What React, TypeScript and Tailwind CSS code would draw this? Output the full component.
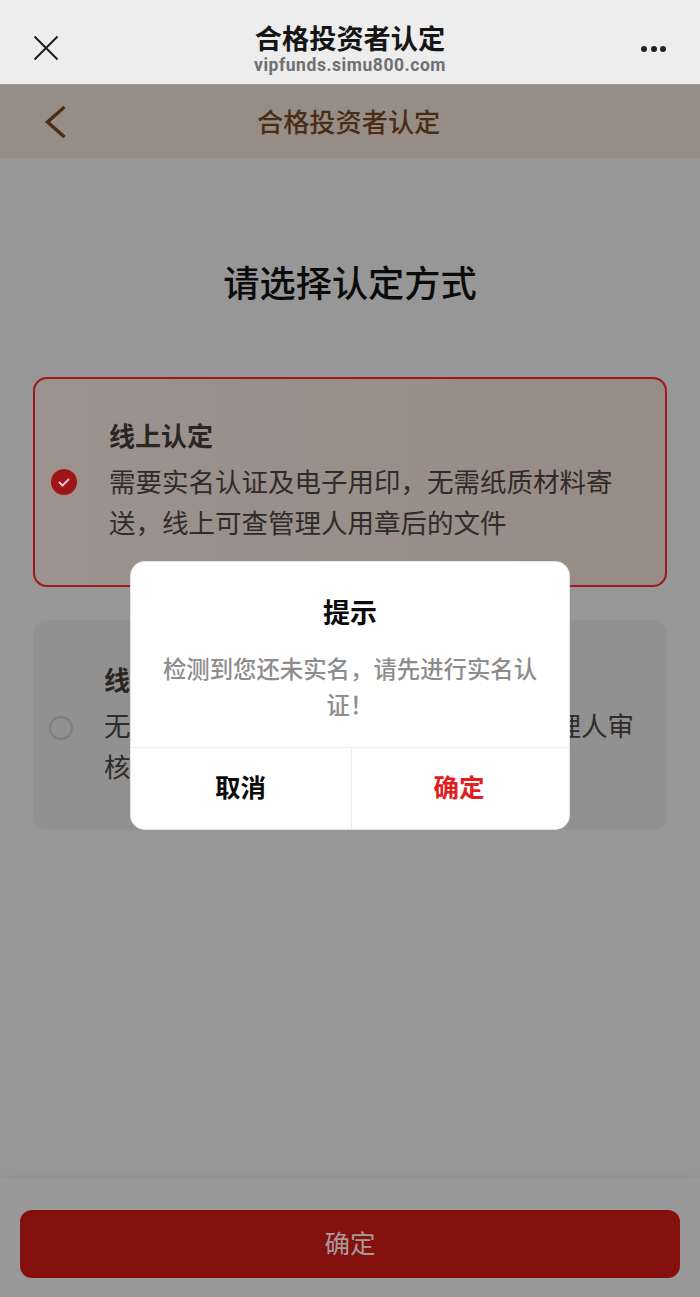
const cjk = "font-['Noto_Sans_CJK_SC','Noto_Sans',sans-serif]";

function MethodCard(props: { active: boolean; title: string; lines: string[] }) {
  const { active, title, lines } = props;
  return (
    <div
      className={
        active
          ? "flex h-[210px] items-center rounded-[14px] border-2 border-[#a0181c] bg-gradient-to-r from-[#9c938e] to-[#978b85] pl-[16px]"
          : "flex h-[210px] items-center rounded-[14px] bg-[#919191] pl-[16px]"
      }
    >
      {active ? (
        <div className="flex h-[26px] w-[26px] shrink-0 items-center justify-center rounded-full bg-[#a01517]">
          <svg width="14" height="12" viewBox="0 0 14 12" fill="none">
            <path d="M2 6l3.5 3.5L12 3" stroke="#d9c9c5" strokeWidth="2" />
          </svg>
        </div>
      ) : (
        <div className="mt-[5px] h-[24px] w-[24px] shrink-0 rounded-full border-2 border-[#7f7f7f]" />
      )}
      <div className={active ? "ml-[32px] pr-[40px] pb-[6px]" : "ml-[31px] pr-[28px] pb-[4px]"}>
        <p className="mb-[6px] text-[26px] leading-[38px] font-bold text-[#2a2623]">{title}</p>
        {lines.map((line) => (
          <p key={line} className="text-[26.5px] leading-[41px] whitespace-nowrap text-[#2f2b28]">
            {line}
          </p>
        ))}
      </div>
    </div>
  );
}

export default function App() {
  return (
    <div className={`relative flex h-[1297px] w-[700px] flex-col overflow-hidden bg-[#979797] ${cjk}`}>
      {/* wechat bar */}
      <div className="flex h-[84px] shrink-0 items-center justify-between bg-[#ededed] pt-[12px] pr-[33px] pl-[33px]">
        <svg width="26" height="26" viewBox="0 0 26 26" fill="none">
          <path d="M1.5 1.5l23 23M24.5 1.5l-23 23" stroke="#1c1c1c" strokeWidth="2" />
        </svg>
        <div className="flex flex-col items-center">
          <p className="text-[27.2px] leading-[33px] font-bold text-[#151515]">合格投资者认定</p>
          <p className="font-['Roboto',sans-serif] text-[17.5px] leading-[22px] font-bold tracking-[0.55px] text-[#6f7072]">
            vipfunds.simu800.com
          </p>
        </div>
        <div className="flex w-[26px] gap-[3.5px] pt-[2px]">
          <span className="h-[6px] w-[6px] shrink-0 rounded-full bg-[#222]" />
          <span className="h-[6px] w-[6px] shrink-0 rounded-full bg-[#222]" />
          <span className="h-[6px] w-[6px] shrink-0 rounded-full bg-[#222]" />
        </div>
      </div>

      {/* page nav */}
      <div className="mt-px flex h-[73px] shrink-0 items-center bg-[#978d87] pl-[44px]">
        <svg width="24" height="34" viewBox="0 0 24 34" fill="none">
          <path d="M20.5 2L3.5 17l17 15" stroke="#4a2d14" strokeWidth="3.4" />
        </svg>
        <p className="ml-[189px] pb-[2px] text-[26.2px] leading-[36px] font-medium text-[#4a2d14]">合格投资者认定</p>
      </div>

      <h1 className="mt-[98px] text-center text-[36.2px] leading-[50px] font-medium text-[#0b0b0b]">请选择认定方式</h1>

      <div className="mt-[71px] flex flex-col gap-[33px] px-[33px]">
        <MethodCard
          active
          title="线上认定"
          lines={["需要实名认证及电子用印，无需纸质材料寄", "送，线上可查管理人用章后的文件"]}
        />
        <MethodCard
          active={false}
          title="线下认定"
          lines={["无需实名认证，需将纸质材料寄送给管理人审", "核，审核通过后完成认定"]}
        />
      </div>

      {/* bottom bar */}
      <div className="mt-auto flex h-[119px] shrink-0 items-start bg-[#999999] px-[20px] pt-[32px] shadow-[0_-6px_10px_rgba(0,0,0,0.03)]">
        <button className="h-[68px] w-full rounded-[12px] bg-[#85110f] pb-[4px] text-[25.5px] text-[#a89a98]">确定</button>
      </div>

      {/* dialog */}
      <div className="absolute top-[562px] left-[131px] flex h-[267px] w-[438px] flex-col rounded-[14px] bg-white shadow-[0_0_0_1px_#e4e4e4]">
        <p className="mt-[31px] text-center text-[27px] leading-[38px] font-bold text-[#0a0a0a]">提示</p>
        <p className="mt-[19px] px-[28px] text-center text-[23.4px] leading-[36px] font-medium text-[#8d8d8d]">
          检测到您还未实名，请先进行实名认证！
        </p>
        <div className="mt-auto flex h-[82px] border-t border-[#eeeeee]">
          <button className="flex-1 border-r border-[#eeeeee] pr-[1px] pb-[4px] text-[25.5px] font-bold text-[#0a0a0a]">取消</button>
          <button className="w-[217px] pr-[3px] pb-[4px] text-[25.5px] font-bold text-[#e0201f]">确定</button>
        </div>
      </div>
    </div>
  );
}
